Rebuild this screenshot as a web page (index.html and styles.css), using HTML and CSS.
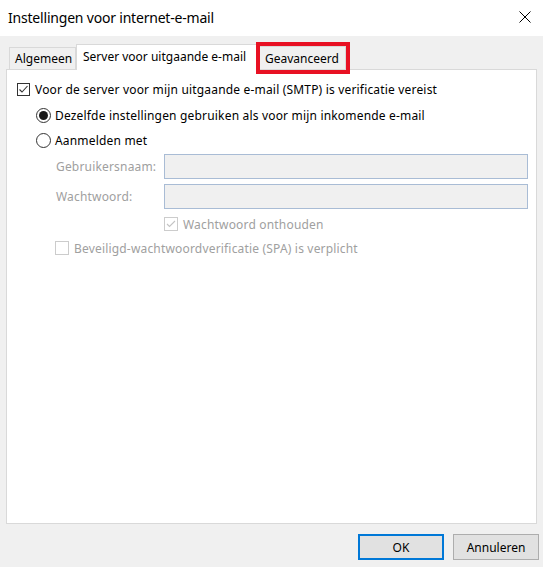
FILE: index.html
```html
<!DOCTYPE html>
<html lang="nl">
<head>
<meta charset="utf-8">
<title>Instellingen voor internet-e-mail</title>
<link rel="stylesheet" href="styles.css">
</head>
<body>
<div class="dialog">
  <div class="titlebar">
    <span class="title">Instellingen voor internet-e-mail</span>
    <svg class="close" width="12" height="12" viewBox="0 0 12 12"><path d="M0.5 0.5 L11.5 11.5 M11.5 0.5 L0.5 11.5" stroke="#000" stroke-width="1" fill="none"/></svg>
  </div>
  <div class="content">
    <div class="tabs">
      <div class="tab tab-general">Algemeen</div>
      <div class="tab tab-active">Server voor uitgaande e-mail</div>
      <div class="tab tab-advanced">Geavanceerd</div>
    </div>
    <div class="panel">
      <div class="row row-first">
        <span class="check">
          <svg width="13" height="13" viewBox="0 0 13 13"><path d="M2.5 6.5 L5 9 L10.5 3" stroke="#333" stroke-width="1.1" fill="none"/></svg>
        </span>
        <span class="label">Voor de server voor mijn uitgaande e-mail (SMTP) is verificatie vereist</span>
      </div>
      <div class="indent">
        <div class="row row-radio1">
          <span class="radio radio-on"><span class="dot"></span></span>
          <span class="label">Dezelfde instellingen gebruiken als voor mijn inkomende e-mail</span>
        </div>
        <div class="row row-radio2">
          <span class="radio"></span>
          <span class="label">Aanmelden met</span>
        </div>
        <div class="sub">
          <div class="form">
            <span class="flabel">Gebruikersnaam:</span>
            <span class="input"></span>
            <span class="flabel">Wachtwoord:</span>
            <span class="input"></span>
            <span></span>
            <div class="row row-remember">
              <span class="check check-disabled">
                <svg width="14" height="14" viewBox="0 0 14 14"><path d="M3 7 L5.5 9.5 L11 4" stroke="#c4c4c4" stroke-width="1.1" fill="none"/></svg>
              </span>
              <span class="label disabled">Wachtwoord onthouden</span>
            </div>
          </div>
          <div class="row row-spa">
            <span class="check check-disabled check-empty"></span>
            <span class="label disabled">Beveiligd-wachtwoordverificatie (SPA) is verplicht</span>
          </div>
        </div>
      </div>
    </div>
    <div class="buttons">
      <button class="btn btn-default">OK</button>
      <button class="btn">Annuleren</button>
    </div>
  </div>
</div>
</body>
</html>
```

FILE: styles.css
```css
* { box-sizing: border-box; }
html, body { margin: 0; padding: 0; }
body {
  width: 543px;
  height: 567px;
  overflow: hidden;
  background: #f0f0f0;
  font-family: "Noto Sans", "Open Sans", sans-serif;
  font-size: 12px;
  color: #000;
}
.dialog { width: 543px; height: 567px; display: flex; flex-direction: column; }
.titlebar {
  height: 36px;
  background: #fff;
  display: flex;
  align-items: center;
  justify-content: space-between;
  padding: 0 12px 1px 8px;
}
.title { font-size: 14px; letter-spacing: -0.2px; color: #000; }
.close { display: block; margin-top: -2px; }
.content { flex: 1; display: flex; flex-direction: column; padding: 8px 6px 0 6px; }
.tabs { display: flex; align-items: flex-end; height: 25px; padding-left: 3px; position: relative; z-index: 1; }
.tab {
  height: 22px;
  border: 1px solid #d9d9d9;
  border-bottom: none;
  background: #f0f0f0;
  display: flex;
  align-items: center;
  padding-left: 5px;
  white-space: nowrap;
}
.tab-general { width: 67px; }
.tab-active {
  width: 183px;
  height: 26px;
  margin-bottom: -1px;
  background: #fff;
  padding-left: 6px;
  padding-bottom: 2px;
}
.tab-advanced {
  width: 87px;
  height: 23px;
  border-left: none;
  padding-left: 6px;
  position: relative;
}
.tab-advanced::after {
  content: "";
  position: absolute;
  left: -3px;
  right: -5px;
  top: -5px;
  bottom: -5px;
  border: 4px solid #e81123;
}
.panel {
  width: 531px;
  height: 455px;
  background: #fff;
  border: 1px solid #d9d9d9;
  padding: 9px 10px 0 10px;
  display: flex;
  flex-direction: column;
  letter-spacing: 0.18px;
}
.row { display: flex; align-items: center; height: 20px; }
.label { white-space: nowrap; }
.disabled { color: #a0a0a0; }
.check {
  width: 13px;
  height: 13px;
  border: 1px solid #333;
  background: #fff;
  margin-right: 5px;
  position: relative;
  flex: none;
}
.check svg { position: absolute; left: -1px; top: -1px; }
.check-disabled { width: 14px; height: 14px; border-color: #cccccc; }
.indent { padding-left: 19px; display: flex; flex-direction: column; }
.sub { padding-left: 19px; display: flex; flex-direction: column; }
.row-radio1 { margin-top: 6px; }
.row-radio2 { margin-top: 5px; }
.radio {
  width: 15px;
  height: 15px;
  border: 1px solid #333;
  border-radius: 50%;
  margin-right: 4px;
  display: flex;
  align-items: center;
  justify-content: center;
  flex: none;
}
.radio-on .dot { width: 9px; height: 9px; border-radius: 50%; background: #1a1a1a; }
.form {
  margin-top: 4px;
  display: grid;
  grid-template-columns: 109px 364px;
  grid-auto-rows: auto;
  row-gap: 5px;
  align-items: center;
}
.flabel { color: #a0a0a0; padding-left: 1px; }
.input { height: 25px; background: #f0f0f0; border: 1px solid #a9bcd5; }
.row-remember { margin-top: 0; height: 20px; }
.row-spa { margin-top: 4px; }
.buttons {
  display: flex;
  justify-content: flex-end;
  gap: 9px;
  padding: 10px 4px 0 0;
  margin-right: -6px;
}
.btn {
  width: 86px;
  height: 26px;
  background: #e1e1e1;
  border: 1px solid #adadad;
  font-family: inherit;
  font-size: 12px;
  color: #000;
  padding: 0;
}
.btn-default { border: 2px solid #0078d7; }
```
